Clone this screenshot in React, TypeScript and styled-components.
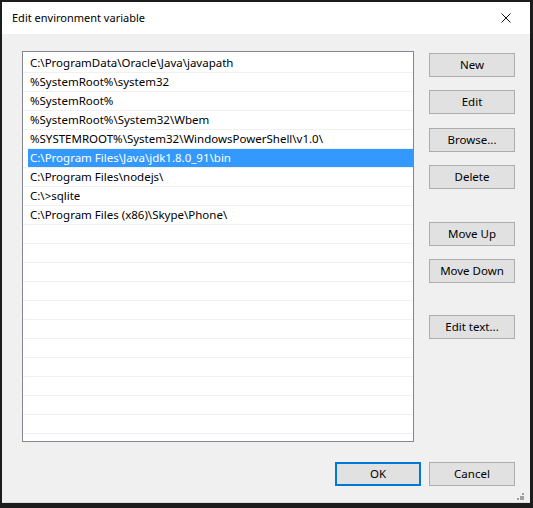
import React from "react";
import styled, { createGlobalStyle, css } from "styled-components";

const Global = createGlobalStyle`
  html, body { margin: 0; padding: 0; background: #ffffff; }
  * { box-sizing: border-box; }
`;

const FONT = `"Noto Sans", "Open Sans", "Liberation Sans", sans-serif`;

const Window = styled.div`
  position: relative;
  width: 533px;
  height: 508px;
  border-style: solid;
  border-color: #1c1c1c;
  border-width: 2px 3px 5px 2px;
  display: flex;
  flex-direction: column;
  font-family: ${FONT};
  font-size: 11.5px;
  color: #000;
`;

const TitleBar = styled.div`
  height: 32px;
  flex: none;
  background: #ffffff;
  display: flex;
  align-items: center;
  justify-content: space-between;
  padding: 0 19px 0 10px;
`;

const Title = styled.span`
  font-size: 11px;
  line-height: 16px;
`;

const CloseBtn = styled.span`
  width: 10px;
  height: 10px;
  display: flex;
`;

const Body = styled.div`
  flex: 1;
  background: #f0f0f0;
  border-bottom: 1px solid #dedede;
  padding: 17px 15px 16px 20px;
  display: flex;
  flex-direction: column;
`;

const Main = styled.div`
  display: grid;
  grid-template-columns: 392px 86px;
  column-gap: 15px;
`;

const List = styled.div`
  height: 391px;
  background: #ffffff;
  border: 1px solid #828790;
  padding-top: 2px;
  overflow: hidden;
  display: flex;
  flex-direction: column;
`;

const Row = styled.div`
  height: 19px;
  flex: none;
  border-bottom: 1px solid #f0f0f0;
  padding-left: 5px;
  display: flex;
`;

const Cell = styled.div<{ $selected?: boolean }>`
  flex: 1;
  padding-left: 2px;
  line-height: 18px;
  white-space: nowrap;
  ${(p) =>
    p.$selected &&
    css`
      background: #3399ff;
      color: #ffffff;
    `}
`;

const ButtonCol = styled.div`
  display: flex;
  flex-direction: column;
  padding-top: 2px;
`;

const Button = styled.button<{ $mt?: number; $default?: boolean }>`
  width: 86px;
  height: 24px;
  margin-top: ${(p) => p.$mt ?? 0}px;
  background: #e1e1e1;
  border: 1px solid #adadad;
  font-family: ${FONT};
  font-size: 11.5px;
  color: #000;
  padding: 0;
  line-height: 20px;
  ${(p) =>
    p.$default &&
    css`
      border: 2px solid #0078d7;
    `}
`;

const Footer = styled.div`
  margin-top: 20px;
  display: flex;
  justify-content: flex-end;
  gap: 8px;
`;

const Grip = styled.div`
  position: absolute;
  right: 6px;
  bottom: 3px;
  width: 7px;
  height: 7px;
  display: grid;
  grid-template-columns: repeat(3, 2px);
  grid-template-rows: repeat(3, 2px);
  gap: 0.5px;
`;

const Dot = styled.span<{ $on: boolean }>`
  background: ${(p) => (p.$on ? "#a0a0a0" : "transparent")};
`;

const paths = [
  "C:\\ProgramData\\Oracle\\Java\\javapath",
  "%SystemRoot%\\system32",
  "%SystemRoot%",
  "%SystemRoot%\\System32\\Wbem",
  "%SYSTEMROOT%\\System32\\WindowsPowerShell\\v1.0\\",
  "C:\\Program Files\\Java\\jdk1.8.0_91\\bin",
  "C:\\Program Files\\nodejs\\",
  "C:\\>sqlite",
  "C:\\Program Files (x86)\\Skype\\Phone\\",
];

const rows = Array.from({ length: 21 }, (_, i) => paths[i] ?? "");

export default function App() {
  return (
    <>
      <Global />
      <Window>
        <TitleBar>
          <Title>Edit environment variable</Title>
          <CloseBtn>
            <svg width="10" height="10" viewBox="0 0 10 10">
              <path d="M0.5 0.5 L9.5 9.5 M9.5 0.5 L0.5 9.5" stroke="#111" strokeWidth="1" fill="none" />
            </svg>
          </CloseBtn>
        </TitleBar>
        <Body>
          <Main>
            <List>
              {rows.map((r, i) => (
                <Row key={i}>
                  <Cell $selected={i === 5}>{r}</Cell>
                </Row>
              ))}
            </List>
            <ButtonCol>
              <Button>New</Button>
              <Button $mt={13}>Edit</Button>
              <Button $mt={14}>Browse...</Button>
              <Button $mt={13}>Delete</Button>
              <Button $mt={33}>Move Up</Button>
              <Button $mt={13}>Move Down</Button>
              <Button $mt={32}>Edit text...</Button>
            </ButtonCol>
          </Main>
          <Footer>
            <Button $default>OK</Button>
            <Button>Cancel</Button>
          </Footer>
        </Body>
        <Grip>
          {[0, 0, 1, 0, 1, 1, 1, 1, 1].map((on, i) => (
            <Dot key={i} $on={!!on} />
          ))}
        </Grip>
      </Window>
    </>
  );
}
